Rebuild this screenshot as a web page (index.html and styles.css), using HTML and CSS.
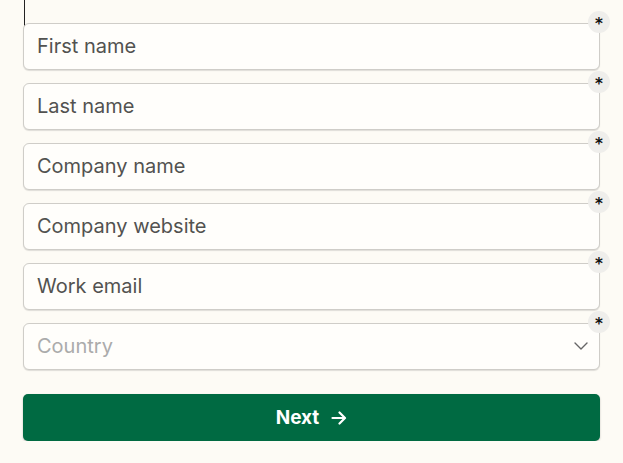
FILE: index.html
```html
<!DOCTYPE html>
<html>
<head>
<meta charset="utf-8">
<link rel="stylesheet" href="styles.css">
</head>
<body>
<div class="caret"></div>
<form class="form">
  <div class="field"><div class="input">First name</div><span class="req">*</span></div>
  <div class="field"><div class="input">Last name</div><span class="req">*</span></div>
  <div class="field"><div class="input">Company name</div><span class="req">*</span></div>
  <div class="field"><div class="input">Company website</div><span class="req">*</span></div>
  <div class="field"><div class="input">Work email</div><span class="req">*</span></div>
  <div class="field"><div class="input select"><span class="ph">Country</span>
    <svg class="chev" width="14" height="8" viewBox="0 0 14 8"><path d="M1 1l6 6 6-6" fill="none" stroke="#666" stroke-width="1.4" stroke-linecap="round" stroke-linejoin="round"/></svg>
  </div><span class="req">*</span></div>
  <button type="button" class="next">Next
    <svg width="16" height="14" viewBox="0 0 16 14"><path d="M1.5 7h12M8.5 1.5L14 7l-5.5 5.5" fill="none" stroke="#fff" stroke-width="2.2" stroke-linecap="round" stroke-linejoin="round"/></svg>
  </button>
</form>
</body>
</html>
```
FILE: styles.css
```css
html, body {
  margin: 0;
  padding: 0;
  background: #fdfbf5;
  font-family: Inter, "Noto Sans", sans-serif;
}
.caret {
  position: absolute;
  left: 24px;
  top: 0;
  width: 1px;
  height: 42px;
  background: linear-gradient(#222 0, #222 60%, #999 100%);
}
.form {
  padding: 23px 23px 0 23px;
  width: 577px;
  display: flex;
  flex-direction: column;
  gap: 13px;
}
.field {
  position: relative;
}
.input {
  box-sizing: border-box;
  height: 47px;
  border: 1px solid #cfcdc8;
  border-radius: 6px;
  background: #fffefb;
  box-shadow: 0 1px 1px rgba(0,0,0,0.12);
  padding: 0 13px 2px 13px;
  display: flex;
  align-items: center;
  font-size: 20px;
  color: #525250;
}
.select {
  justify-content: space-between;
  padding-right: 11px;
}
.ph {
  color: #ababab;
}
.req {
  position: absolute;
  right: -10px;
  top: -12px;
  width: 22px;
  height: 22px;
  border-radius: 50%;
  background: #efeeeb;
  color: #111;
  font-weight: 700;
  font-size: 15px;
  line-height: 27px;
  text-align: center;
  font-family: "DejaVu Sans", sans-serif;
}
.next {
  margin-top: 11px;
  box-sizing: border-box;
  width: 577px;
  height: 47px;
  border: none;
  border-radius: 5px;
  background: #006a42;
  box-shadow: 0 1px 2px rgba(0,0,0,0.25);
  color: #fff;
  font-family: Inter, "Noto Sans", sans-serif;
  font-weight: 700;
  font-size: 19px;
  display: flex;
  align-items: center;
  justify-content: center;
  gap: 12px;
  padding: 0;
}
```
